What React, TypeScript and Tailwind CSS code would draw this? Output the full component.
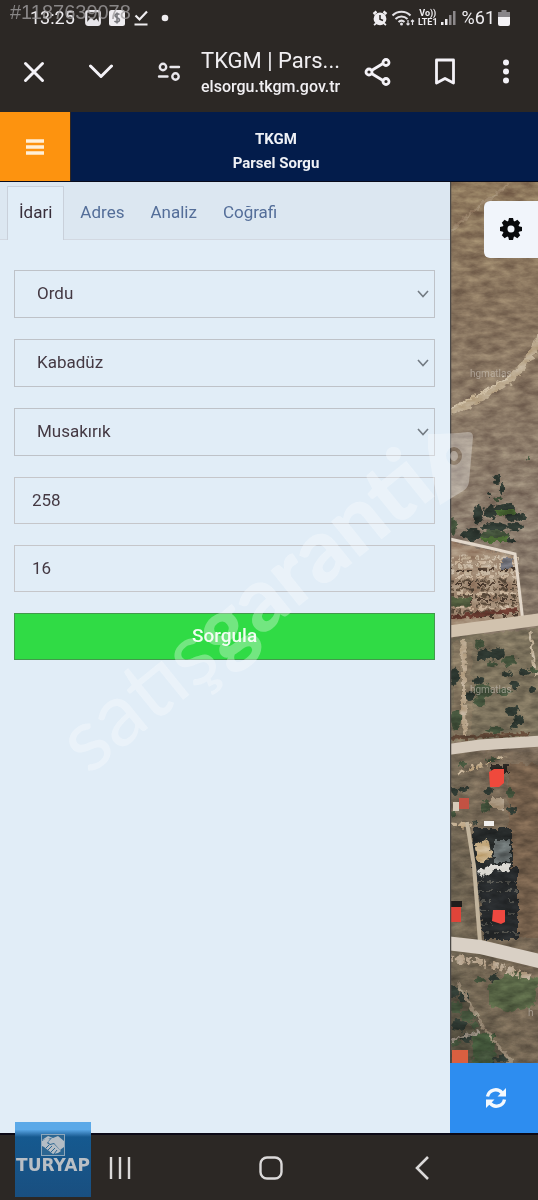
import React, { useState } from 'react';

const tabs = ['İdari', 'Adres', 'Analiz', 'Coğrafi'];

const selects = [
  { id: 'il', label: 'İl', value: 'Ordu' },
  { id: 'ilce', label: 'İlçe', value: 'Kabadüz' },
  { id: 'mahalle', label: 'Mahalle', value: 'Musakırık' },
];

const inputs = [
  { id: 'ada', label: 'Ada', value: '258' },
  { id: 'parsel', label: 'Parsel', value: '16' },
];

// [x, y, rx, ry]
const trees = [
  [47, 297, 4, 4], [40, 312, 3, 2], [48, 317, 6, 2], [52, 307, 2, 5], [28, 332, 5, 10], [40, 330, 6, 7],
  [55, 327, 10, 5], [64, 334, 9, 5], [74, 336, 3, 2], [44, 345, 14, 4], [65, 345, 8, 4],
  [22, 353, 10, 6], [45, 354, 14, 6], [62, 358, 5, 3], [3, 344, 3, 9], [78, 276, 2, 2],
  [30, 462, 5, 4], [34, 473, 8, 5], [47, 472, 8, 6], [60, 479, 7, 5], [42, 482, 5, 3], [56, 492, 6, 3],
  [74, 490, 5, 3], [84, 489, 4, 3], [28, 499, 6, 3], [33, 509, 9, 7], [30, 520, 6, 5], [54, 510, 7, 3],
  [65, 503, 4, 4], [62, 529, 7, 4], [68, 538, 5, 5], [45, 548, 8, 3], [64, 543, 3, 3],
  [5, 494, 4, 9], [20, 514, 4, 5], [6, 538, 5, 10], [82, 508, 3, 3],
  [4, 610, 4, 4], [14, 608, 4, 3], [38, 609, 5, 4], [60, 611, 4, 5], [36, 625, 4, 6], [62, 628, 3, 4],
  [3, 632, 3, 4], [26, 640, 2, 3], [42, 578, 7, 2], [12, 582, 5, 2],
  [4, 809, 5, 6], [14, 815, 5, 5], [6, 826, 6, 6], [18, 834, 7, 6], [8, 843, 9, 5], [24, 844, 4, 4],
  [16, 856, 6, 4], [6, 861, 5, 3], [36, 874, 8, 6], [50, 877, 8, 3], [30, 798, 6, 3], [44, 796, 4, 3],
];

const speckRows = [376, 384, 391, 399, 407, 414, 422, 430];

const CloseIcon = () => (
  <svg className="size-6" viewBox="0 0 24 24" fill="none" stroke="#f4f2f7" strokeWidth="3" strokeLinecap="round">
    <path d="M3.500 3.500 20.500 20.500M20.500 3.500 3.500 20.500" />
  </svg>
);

const DownIcon = () => (
  <svg className="h-4 w-6" viewBox="0 0 24 16" fill="none" stroke="#f4f2f7" strokeWidth="3" strokeLinecap="round" strokeLinejoin="round">
    <path d="M1.500 2 12 12.500 22.500 2" />
  </svg>
);

const TuneIcon = () => (
  <svg className="h-5 w-6" viewBox="0 0 24 20" fill="none" stroke="#e9e7ec" strokeWidth="2.400" strokeLinecap="round">
    <circle cx="6" cy="5" r="3.200" />
    <path d="M13.500 5H22M2 14.500H10.500" />
    <circle cx="18.500" cy="14.500" r="3.200" />
  </svg>
);

const ShareIcon = () => (
  <svg className="h-7 w-7" viewBox="0 0 28 28" fill="none" stroke="#f4f2f7" strokeWidth="2.800">
    <path d="M7.500 12.500 19 5.500M7.500 15.500 19 22.500" />
    <circle cx="5" cy="14" r="3" />
    <circle cx="22" cy="4.500" r="3" />
    <circle cx="22" cy="23.500" r="3" />
  </svg>
);

const BookmarkIcon = () => (
  <svg className="h-7 w-6" viewBox="0 0 24 28" fill="none" stroke="#f4f2f7" strokeWidth="2.800" strokeLinejoin="round">
    <path d="M3.500 2H20.500V25L12 20.500 3.500 25Z" />
  </svg>
);

const MoreIcon = () => (
  <svg className="h-7 w-2" viewBox="0 0 8 28" fill="#f4f2f7">
    <circle cx="4" cy="4.500" r="3" />
    <circle cx="4" cy="13.500" r="3" />
    <circle cx="4" cy="22.500" r="3" />
  </svg>
);

const StatusBar = () => (
  <div className="flex h-9 items-center justify-between pl-[30px] pr-7 text-[#efedf0]">
    <div className="flex items-center gap-2">
      <span className="text-[18px] leading-6">13:25</span>
      <svg className="ml-[2px] size-4" viewBox="0 0 16 16">
        <rect x="1.200" y="1.200" width="13.600" height="13.600" rx="2" fill="none" stroke="#e8e6ea" strokeWidth="2.200" />
        <path d="M2 12 6 7.500 9 10.500 11.500 8.500 14 12V14H2Z" fill="#e8e6ea" />
      </svg>
      <svg className="size-4" viewBox="0 0 16 16">
        <rect width="16" height="16" rx="2.500" fill="#efedf0" />
        <path d="M10.500 4.500C9 3.200 6 3.600 6 5.600 6 8 10.500 7.400 10.500 10 10.500 12.200 7 12.600 5.500 11M8 2.500V13.500" fill="none" stroke="#77777b" strokeWidth="1.600" />
      </svg>
      <svg className="h-4 w-4" viewBox="0 0 16 16" fill="none" stroke="#efedf0" strokeWidth="2.200">
        <path d="M2.500 5.500 6.500 9.500 14 1.500M1.500 14.500H14.500" />
      </svg>
      <svg className="h-2 w-4" viewBox="0 0 16 8">
        <circle cx="8" cy="4" r="3.300" fill="#efedf0" />
      </svg>
    </div>
    <div className="flex items-center gap-[3px]">
      <svg className="size-4" viewBox="0 0 16 16">
        <path d="M1.500 4 4.500 1.500M14.500 4 11.500 1.500M3.500 15 2.500 13.500M12.500 15 13.500 13.500" stroke="#efedf0" strokeWidth="2.400" />
        <circle cx="8" cy="8.800" r="6.400" fill="#efedf0" />
        <path d="M8 5V9.200L11 10.500" fill="none" stroke="#2c2825" strokeWidth="1.500" />
      </svg>
      <svg className="h-4 w-6" viewBox="0 0 24 16" fill="none" stroke="#e3e1e5" strokeWidth="2">
        <path d="M1.500 5.500C6.500 0.500 14.500 0.500 19.500 5.500M4.500 9C8 5.500 13 5.500 16.500 9M7.500 12C9.500 10.200 11.500 10.200 13.500 12" />
        <circle cx="10.500" cy="14" r="1.500" fill="#e3e1e5" stroke="none" />
        <path d="M17 10V15M15.500 13.500 17 15 18.500 13.500M21.500 15V10M20 11.500 21.500 10 23 11.500" strokeWidth="1.200" />
      </svg>
      <span className="flex flex-col items-center text-[9px] font-bold leading-[9px]">
        <span>Vo))</span>
        <span>LTE1</span>
      </span>
      <svg className="h-4 w-[15px]" viewBox="0 0 15 16">
        <path d="M0 12H2.500V15H0ZM4 9H6.500V15H4Z" fill="#efedf0" />
        <path d="M8 5H10.500V15H8ZM12 1H14.500V15H12Z" fill="#8d898b" />
      </svg>
      <span className="ml-[3px] text-[18px] leading-6">%61</span>
      <svg className="h-4 w-3" viewBox="0 0 12 16">
        <path d="M3.500 0H8.500V2H12V7H0V2H3.500Z" fill="#89868a" />
        <path d="M0 7H12V14Q12 16 10 16H2Q0 16 0 14Z" fill="#f4f2f5" />
      </svg>
    </div>
  </div>
);

const BrowserBar = () => (
  <div className="flex h-[76px] items-center pb-1 pl-[22px] pr-7">
    <button aria-label="Kapat" className="mr-[43px]"><CloseIcon /></button>
    <button aria-label="Küçült" className="mr-11"><DownIcon /></button>
    <button aria-label="Site ayarları" className="mr-5"><TuneIcon /></button>
    <div className="min-w-0 flex-1 pt-1 text-[#f1eff2]">
      <div className="whitespace-nowrap text-[22px] leading-[26px]">TKGM | Pars...</div>
      <div className="whitespace-nowrap text-[16px] font-medium leading-[26px]">elsorgu.tkgm.gov.tr</div>
    </div>
    <button aria-label="Paylaş" className="ml-5"><ShareIcon /></button>
    <button aria-label="Yer işareti" className="ml-[41px]"><BookmarkIcon /></button>
    <button aria-label="Diğer" className="ml-[45px]"><MoreIcon /></button>
  </div>
);

const Chevron = () => (
  <svg className="pointer-events-none absolute right-[6px] top-5 h-2 w-3" viewBox="0 0 12 8" fill="none" stroke="#737b83" strokeWidth="1.600">
    <path d="M1 1 6 6.500 11 1" />
  </svg>
);

const QueryPanel = () => {
  const [active, setActive] = useState('İdari');

  return (
    <div className="flex min-w-0 flex-1 flex-col bg-[#e1edf7]">
      <div className="flex h-[58px] border-b border-[#d2d8e1] bg-[#dce7f1] pl-[7px] pt-1" role="tablist">
        {tabs.map((tab) => (
          <button
            key={tab}
            role="tab"
            aria-selected={tab === active}
            onClick={() => setActive(tab)}
            className={
              tab === active
                ? '-mb-px mr-[3px] border border-b-0 border-[#c9d0da] bg-[#e1edf7] px-[11px] pb-[2px] text-[17px] text-[#382e3a]'
                : 'px-[13px] text-[17px] text-[#546e99]'
            }
          >
            {tab}
          </button>
        ))}
      </div>
      <form className="flex flex-col gap-[21px] pl-[14px] pr-[15px] pt-[30px]" onSubmit={(e) => e.preventDefault()}>
        {selects.map((s) => (
          <div key={s.id} className="relative">
            <select
              id={s.id}
              aria-label={s.label}
              defaultValue={s.value}
              className="block h-12 w-full appearance-none border border-[#bec2c8] bg-transparent px-[22px] text-[17px] text-[#443943]"
            >
              <option>{s.value}</option>
            </select>
            <Chevron />
          </div>
        ))}
        {inputs.map((f) => (
          <input
            key={f.id}
            id={f.id}
            aria-label={f.label}
            defaultValue={f.value}
            className="block h-[47px] w-full border border-[#c5c6ca] bg-transparent px-[17px] pb-[2px] text-[17px] text-[#443943]"
          />
        ))}
        <button type="submit" className="h-[47px] border border-[#419a4b] bg-[#30db45] text-[19px] font-medium text-[#effcf0]">
          Sorgula
        </button>
      </form>
    </div>
  );
};

const MapView = () => (
  <svg className="absolute inset-0 h-full w-full" viewBox="0 0 88 882" preserveAspectRatio="xMinYMin slice">
    <defs>
      <filter id="rough" x="0" y="0" width="100%" height="100%" colorInterpolationFilters="sRGB">
        <feTurbulence type="fractalNoise" baseFrequency="0.200" numOctaves="2" seed="4" result="n" />
        <feDisplacementMap in="SourceGraphic" in2="n" scale="8" xChannelSelector="R" yChannelSelector="G" />
      </filter>
      <filter id="grain" x="0" y="0" width="100%" height="100%" colorInterpolationFilters="sRGB">
        <feTurbulence type="fractalNoise" baseFrequency="0.060 0.140" numOctaves="4" seed="9" />
        <feColorMatrix values="1 0 0 0 0  1 0 0 0 0  1 0 0 0 0  0 0 0 0 1" />
      </filter>
      <linearGradient id="ground" x1="0" y1="0" x2="0" y2="1">
        <stop offset="0" stopColor="#8e785c" />
        <stop offset="0.150" stopColor="#88745e" />
        <stop offset="0.400" stopColor="#8a7b6c" />
        <stop offset="0.650" stopColor="#766757" />
        <stop offset="1" stopColor="#6f6352" />
      </linearGradient>
      <linearGradient id="slope" x1="0" y1="0" x2="1" y2="0">
        <stop offset="0" stopColor="#5e5d49" stopOpacity="0.350" />
        <stop offset="1" stopColor="#8b7053" stopOpacity="0.100" />
      </linearGradient>
    </defs>
    <rect width="88" height="882" fill="url(#ground)" />
    <g filter="url(#rough)">
      <rect x="-10" y="-10" width="110" height="900" fill="url(#ground)" />
      <rect x="-10" y="570" width="110" height="320" fill="url(#slope)" />
      <path d="M-5 54 22 30 58 3" fill="none" stroke="#a8957b" strokeWidth="3" opacity="0.600" />
      <path d="M-5 232Q30 218 62 196 76 182 95 148" fill="none" stroke="#bba98e" strokeWidth="7" />
      <path d="M-5 229Q30 214 60 193" fill="none" stroke="#d0c0a6" strokeWidth="2" />
      {/* terraced lot */}
      <path d="M-5 358 66 374 73 438 -5 446Z" fill="#a18a74" />
      {speckRows.map((y, i) => (
        <g key={y}>
          <path d={`M-5 ${y}H68`} stroke={i < 3 ? '#c6b59f' : '#5a4a3a'} strokeWidth="3" strokeDasharray="9 4 3 2" />
          <path d={`M-5 ${y + 4}H68`} stroke={i % 2 ? '#4a3a2e' : '#c9b49c'} strokeWidth="2" strokeDasharray="5 6 8 3" />
        </g>
      ))}
      <path d="M-5 420H20" stroke="#4f5a3c" strokeWidth="9" />
      <path d="M0 436 68 428" stroke="#693b30" strokeWidth="4" />
      <path d="M52 377H61V388H52Z" fill="#71727a" />
      {/* wooded lot */}
      <path d="M-5 456 95 446V560H-5Z" fill="#7a705b" />
      <path d="M3 460H22V558H3Z" fill="#83755f" />
      <path d="M13 456 14 555" stroke="#b9a68c" strokeWidth="5" />
      <path d="M80 450 86 495" stroke="#c4b59e" strokeWidth="3" />
      <path d="M-5 556 80 552" stroke="#604736" strokeWidth="4" />
      <path d="M58 582H95V756H60Z" fill="#745f4b" />
      <path d="M22 646H62V688H22Z" fill="#262a2a" />
      <path d="M26 686H68V758H34Z" fill="#26292b" />
      <path d="M28 700H66M28 709H67M30 719H42M58 719H68M30 728H40M58 732H68M32 742H42M34 751H68" stroke="#50504b" strokeWidth="2" strokeDasharray="6 3" />
      <path d="M0 642 22 644M8 592 55 574" stroke="#c2ac8d" strokeWidth="3" strokeDasharray="7 3" />
      <path d="M-5 808 10 806 38 856 66 884H-5Z" fill="#554f40" />
      <path d="M38 802 64 788 88 798 84 824 56 830 38 822Z" fill="#566344" />
      <path d="M22 850 45 852 44 884 24 884Z" fill="#405338" />
      {trees.map(([x, y, rx, ry]) => (
        <ellipse key={`${x}-${y}`} cx={x} cy={y} rx={rx} ry={ry} fill={x % 3 === 0 ? '#42513a' : '#2d3730'} />
      ))}
      <path d="M30 355H58V360H34ZM46 328H66V332H46Z" fill="#4c6b34" />
      <path d="M7 800 34 846 66 886" fill="none" stroke="#958672" strokeWidth="3" />
      <path d="M-5 860 30 850" stroke="#91877b" strokeWidth="3" />
      <path d="M0 776 42 782 82 796" fill="none" stroke="#b8a58e" strokeWidth="7" strokeDasharray="4 3 8 2" />
      <path d="M30 692 44 685 60 687" fill="none" stroke="#dddbd5" strokeWidth="7" />
      <path d="M25 664 38 656 42 676 28 682Z" fill="#c6ad84" />
      <path d="M44 658H60V680H44Z" fill="#646b6b" />
      <path d="M42 583H58V592H42Z" fill="#2a2622" />
      <path d="M40 616H54V627H40Z" fill="#a99780" />
    </g>
    <rect width="88" height="882" filter="url(#grain)" className="mix-blend-overlay" opacity="0.350" />
    <path d="M-5 356 40 366 65 372 73 440" fill="none" stroke="#e3d8cb" strokeWidth="3" />
    <path d="M17 640 24 684 30 760" fill="none" stroke="#c2b49d" strokeWidth="4" />
    <path d="M-5 450 40 444 93 437" fill="none" stroke="#d1c2ae" strokeWidth="12" />
    <path d="M-5 568 30 563 93 559" fill="none" stroke="#d5cabc" strokeWidth="11" />
    <path d="M-5 761 30 765 60 772 93 780" fill="none" stroke="#d9d0c5" strokeWidth="14" />
    <path d="M39 590 44 587H54V601L49 605H40Z" fill="#ef493c" />
    <path d="M9 616H19V627H9Z" fill="#c35243" />
    <path d="M3 620H9V629H3Z" fill="#d6cab9" />
    <path d="M34 639H44V644H34Z" fill="#f2f0ee" />
    <path d="M0 719H12V725H0Z" fill="#211d1c" />
    <path d="M0 725H11V740H0Z" fill="#e04439" />
    <path d="M43 728H55V740L51 742 42 739Z" fill="#ef4840" />
    <path d="M2 868H18V882H2Z" fill="#d95f40" />
    <g fill="#d4cdc4" fontFamily="Roboto, sans-serif" fontSize="10" opacity="0.550">
      <text x="20" y="195">hgmatlas</text>
      <text x="20" y="511">hgmatlas</text>
      <text x="78" y="834">h</text>
    </g>
    <path d="M0.500 0V882" stroke="#4b4947" strokeWidth="1.500" />
  </svg>
);

const GearIcon = () => (
  <svg className="size-[22px]" viewBox="0 0 22 22">
    <g fill="#090a0c">
      <circle cx="11" cy="11" r="8.300" />
      <path id="tooth" d="M9 0H13L14 4V18L13 22H9L8 18V4Z" />
      <use href="#tooth" transform="rotate(45 11 11)" />
      <use href="#tooth" transform="rotate(90 11 11)" />
      <use href="#tooth" transform="rotate(135 11 11)" />
    </g>
    <circle cx="11" cy="11" r="3.500" fill="#f1f5fb" />
  </svg>
);

const RefreshIcon = () => (
  <svg className="h-[22px] w-[22px]" viewBox="0 0 22 22" fill="none" stroke="#f3f8fd" strokeWidth="3.400">
    <path d="M2.500 9.500C4 2.500 12.500 0.500 17 5.800M19.500 12.500C18 19.500 9.500 21.500 5 16.200" />
    <path d="M21 1V9.500H12.500ZM1 21V12.500H9.500Z" fill="#f3f8fd" stroke="none" />
  </svg>
);

const Watermark = () => (
  <svg className="pointer-events-none absolute left-0 top-[420px] h-[380px] w-[538px]" viewBox="0 420 538 380" aria-hidden="true">
    <g fill="#ffffff" opacity="0.320">
      <g transform="translate(89 776) rotate(-39)" fontFamily="Lato, sans-serif" fontSize="88">
        <text>
          <tspan fontWeight="400">satış</tspan>
          <tspan fontWeight="900">garanti</tspan>
        </text>
      </g>
      <path
        fillRule="evenodd"
        d="M428 434Q450 434 468 432Q473 432 473 437L469 482Q468 488 463 491L440 505 434 484 428 448ZM446 456A8 9 0 1 0 462 456 8 9 0 1 0 446 456ZM450 456A4 5 0 1 0 458 456 4 5 0 1 0 450 456Z"
      />
    </g>
  </svg>
);

const TuryapBadge = () => (
  <div className="absolute bottom-[3px] left-[15px] flex h-[75px] w-[76px] flex-col items-center bg-linear-to-b from-[#5ba9e8] from-10% via-[#15598f] via-20% to-[#194f80] pt-3">
    <svg className="h-[22px] w-6" viewBox="0 0 24 22">
      <rect x="0.500" y="0.500" width="23" height="21" fill="#2c6692" stroke="#8da6b9" />
      <path d="M1 6 7 2 12 4 17 2 23 7V13L19 16 13 9 9 10 7 8 11 4" fill="#b4bdc5" />
      <path d="M1 7 6 4 9 5 6 9 9 11 13 10 20 17 17 19 12 20 3 13 1 12Z" fill="#b4bdc5" />
      <path d="M5 14 8 11M7 16 11 12M10 18 14 14M13 20 16 16" stroke="#2c6692" strokeWidth="1" />
    </svg>
    <span className="font-['DejaVu_Sans'] text-[17px] font-bold leading-[18px] text-[#b9bfc5]">TURYAP</span>
  </div>
);

const App: React.FC = () => {
  return (
    <div className="relative flex min-h-screen flex-col overflow-hidden bg-[#2c2825] font-[Roboto,sans-serif]">
      <StatusBar />
      <BrowserBar />

      <header className="flex h-[70px] border-b border-[#080b1c] bg-[#031c4b]">
        <button aria-label="Menü" className="flex w-[71px] items-center justify-center border-r border-[#33261d] bg-[#fd930f]">
          <svg className="h-4 w-[18px]" viewBox="0 0 18 16" stroke="#fff0d8" strokeWidth="3.400">
            <path d="M0 2H18M0 8H18M0 14H18" />
          </svg>
        </button>
        <h1 className="flex-1 pr-[57px] pt-[15px] text-center text-[15px] font-bold leading-6 text-[#eff1f6]">
          TKGM
          <br />
          Parsel Sorgu
        </h1>
      </header>

      <main className="flex flex-1">
        <QueryPanel />
        <aside className="flex w-[88px] flex-col">
          <div className="relative flex flex-1 flex-col items-end pt-[19px]">
            <MapView />
            <button aria-label="Ayarlar" className="relative flex h-[57px] w-[54px] items-center justify-center rounded-l-md bg-[#f1f5fb] pb-[2px]">
              <GearIcon />
            </button>
          </div>
          <button aria-label="Yenile" className="flex h-[70px] items-center justify-center bg-[#2d8df0] pl-1">
            <RefreshIcon />
          </button>
        </aside>
      </main>

      <footer className="flex h-[67px] items-center justify-between border-t-2 border-[#0c0a17] pl-[109px] pr-[105px]">
        <button aria-label="Son uygulamalar">
          <svg className="h-6 w-[22px]" viewBox="0 0 22 24" stroke="#dbd9d9" strokeWidth="2.400">
            <path d="M2 1V23M11 1V23M20 1V23" />
          </svg>
        </button>
        <button aria-label="Ana ekran">
          <svg className="h-6 w-6" viewBox="0 0 24 24" fill="none" stroke="#dbd9d9" strokeWidth="2.400">
            <rect x="1.500" y="1.500" width="21" height="21" rx="6.500" />
          </svg>
        </button>
        <button aria-label="Geri">
          <svg className="h-6 w-[22px]" viewBox="0 0 22 24" fill="none" stroke="#dbd9d9" strokeWidth="2.600">
            <path d="M17 1 6 12 17 23" />
          </svg>
        </button>
      </footer>

      <span className="absolute left-[10px] top-0 font-['Liberation_Sans'] text-[20px] leading-6 text-[#a09e9f]/80">#1187639078</span>
      <Watermark />
      <TuryapBadge />
    </div>
  );
};

export default App;
